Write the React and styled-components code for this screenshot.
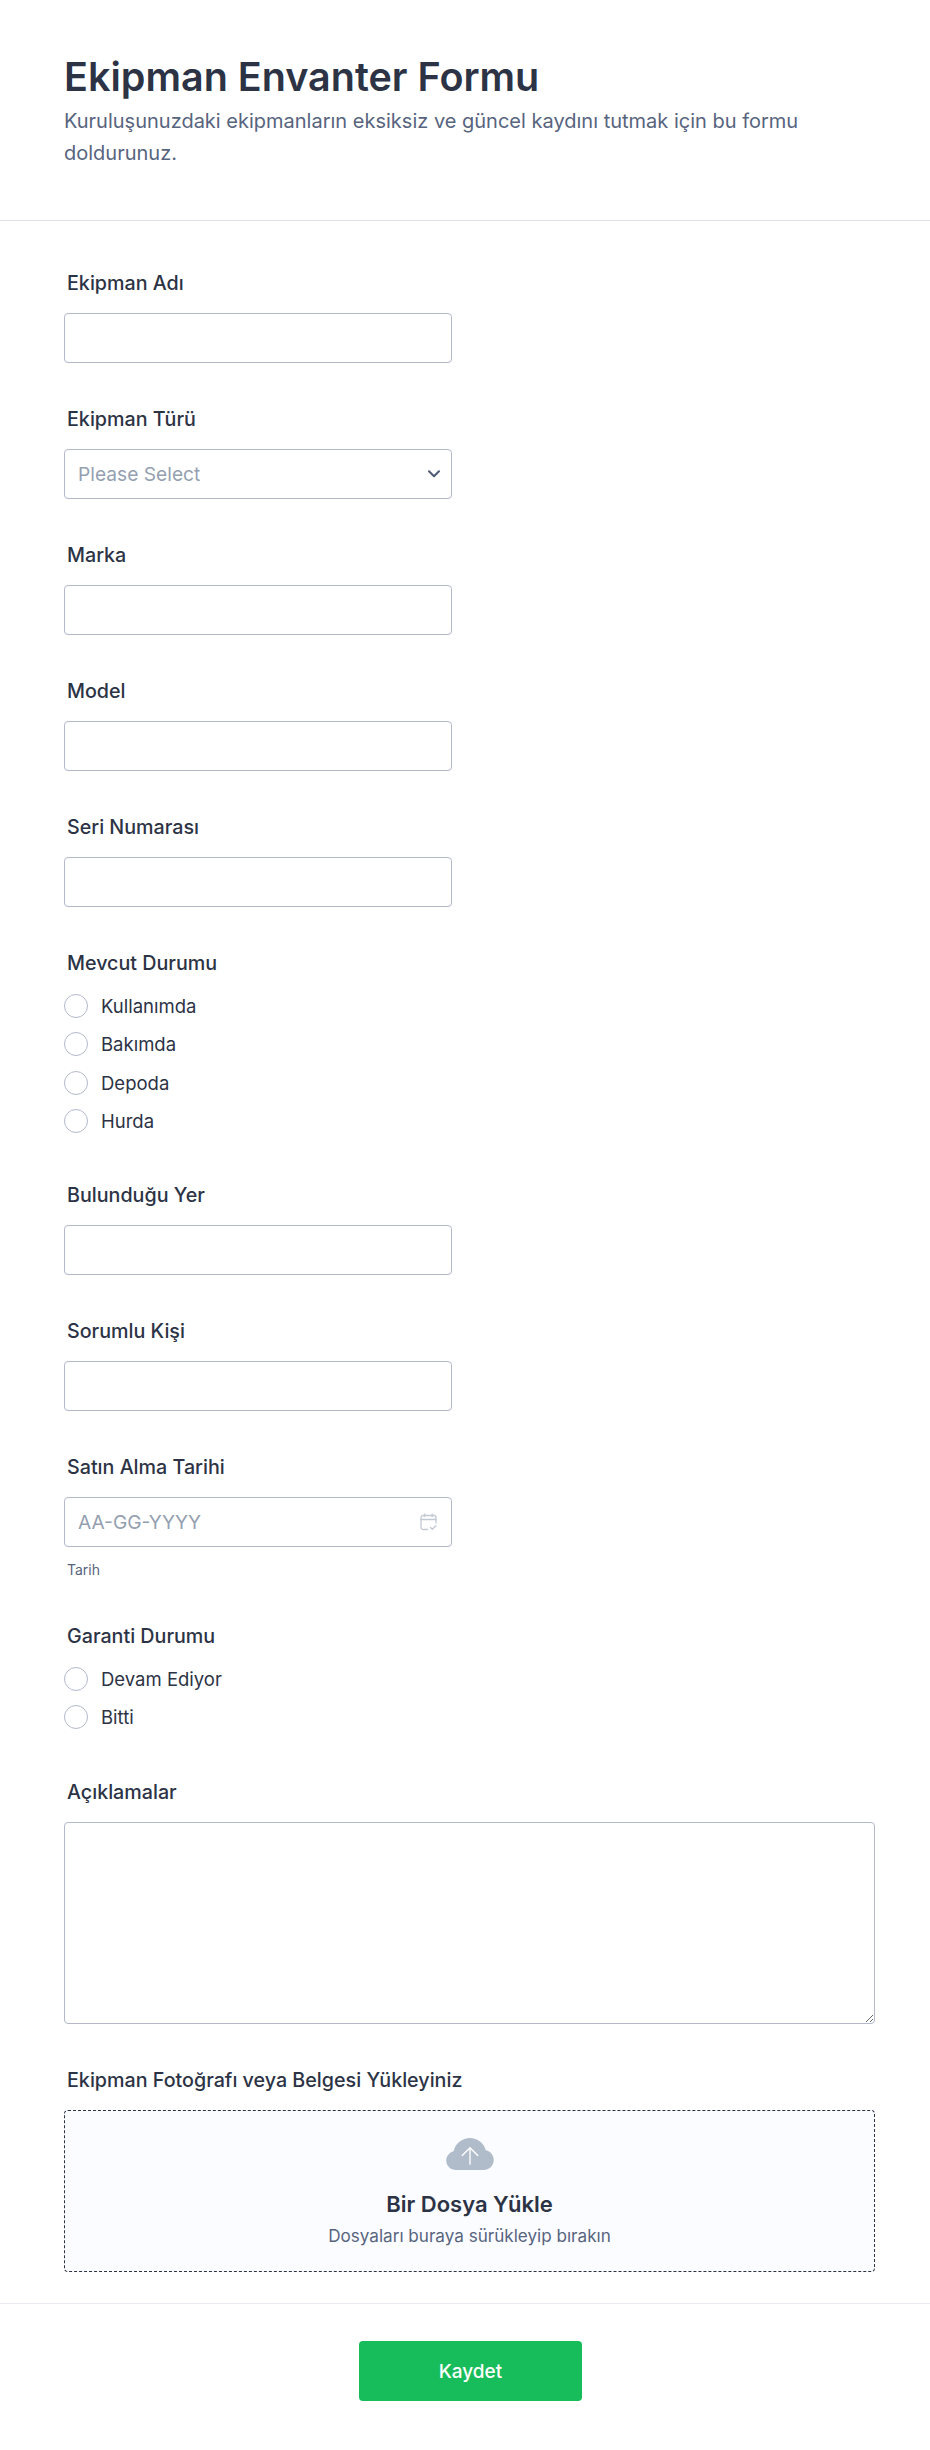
import React from 'react'
import styled, { createGlobalStyle } from 'styled-components'

const GlobalStyle = createGlobalStyle`
  * { box-sizing: border-box; }
  html, body { margin: 0; padding: 0; background: #fff; }
  body { font-family: Inter, "Noto Sans", sans-serif; color: #2c3345; }
`

const Page = styled.div`
  width: 930px;
  min-height: 2450px;
  display: flex;
  flex-direction: column;
`

const Header = styled.header`
  height: 221px;
  padding: 52px 64px 0;
  border-bottom: 1px solid #dfe2ea;
`

const Title = styled.h1`
  margin: 0;
  font-size: 39.5px;
  line-height: 50px;
  font-weight: 600;
  color: #2c3345;
`

const Subtitle = styled.p`
  margin: 3px 0 0;
  width: 802px;
  font-size: 20px;
  line-height: 32px;
  color: #57647e;
`

const Form = styled.form`
  padding: 48px 55px 31px 64px;
  display: flex;
  flex-direction: column;
`

const Field = styled.div`
  margin-bottom: ${p => p.$gap ?? 42}px;
`

const Label = styled.label`
  display: block;
  margin: 0 0 16px 3px;
  font-size: 19.7px;
  line-height: 28px;
  font-weight: 500;
  color: #2c3345;
`

const Input = styled.input`
  display: block;
  width: 388px;
  height: 50px;
  padding: 0 13px;
  border: 1px solid #b4b8ca;
  border-radius: 4px;
  background: #fff;
  font: 19px Inter, sans-serif;
  color: #2c3345;
  outline: none;
`

const Control = styled.div`
  width: 388px;
  height: 50px;
  padding: 0 ${p => p.$right ?? 14}px 0 13px;
  border: 1px solid #b4b8ca;
  border-radius: 4px;
  display: flex;
  align-items: center;
  justify-content: space-between;
  font-size: 19.2px;
  color: #949fb0;
`

const Hint = styled.div`
  margin: 14px 0 0 3px;
  font-size: 14px;
  line-height: 18px;
  color: #57647e;
`

const RadioList = styled.div`
  display: flex;
  flex-direction: column;
  gap: 14.33px;
  padding-top: 1px;
`

const RadioRow = styled.label`
  display: flex;
  align-items: center;
  gap: 13px;
  height: 24px;
  font-size: 18.5px;
  color: #2c3345;
`

const Circle = styled.span`
  width: 24px;
  height: 24px;
  border: 1px solid #b4b8ca;
  border-radius: 50%;
  background: #fff;
`

const TextArea = styled.textarea`
  display: block;
  width: 100%;
  height: 202px;
  border: 1px solid #b4b8ca;
  border-radius: 4px;
  outline: none;
  background: #fff;
`

const Upload = styled.div`
  height: 162px;
  border: 1px dashed #2c3345;
  border-radius: 4px;
  background: #fbfcff;
  display: flex;
  flex-direction: column;
  align-items: center;
  padding-top: 27px;
`

const UploadTitle = styled.div`
  margin-top: 20px;
  font-size: 22px;
  line-height: 28px;
  font-weight: 600;
  color: #2c3345;
`

const UploadText = styled.div`
  margin-top: 6px;
  font-size: 17.1px;
  line-height: 24px;
  color: #57647e;
`

const Footer = styled.footer`
  border-top: 1px solid #eaebf2;
  padding: 37px 53px 50px 64px;
  display: flex;
  justify-content: center;
`

const Submit = styled.button`
  width: 223px;
  height: 60px;
  border: 0;
  border-radius: 4px;
  background: #18bd5b;
  color: #fff;
  font: 500 19px Inter, sans-serif;
`

const ChevronIcon = () => (
  <svg width="12" height="8" viewBox="0 0 12 8" fill="none">
    <path d="M1 1.2 6 6.2l5-5" stroke="#4f5b75" strokeWidth="2" strokeLinecap="round" strokeLinejoin="round" />
  </svg>
)

const CalendarIcon = () => (
  <svg width="17" height="18" viewBox="0 0 17 18" fill="none" stroke="#c3c9d4" strokeWidth="1.3" strokeLinecap="round" strokeLinejoin="round">
    <path d="M7.5 16.5H3a2 2 0 0 1-2-2V4.5a2 2 0 0 1 2-2h11a2 2 0 0 1 2 2V10" />
    <path d="M1 6.5h15M4.8 1v2.5M12.2 1v2.5" />
    <path d="m10.5 14.5 1.8 1.8 3.5-3.5" />
  </svg>
)

const CloudIcon = () => (
  <svg width="48" height="32" viewBox="0 0 49 33">
    <path fill="#b1bccb" d="M10 33C4.4 33 0 28.6 0 23.2c0-4.6 3.2-8.5 7.6-9.6C9.6 5.6 16.4 0 24.4 0c7.8 0 14.4 5.2 16.5 12.6C45.6 13.6 49 17.8 49 22.8 49 28.4 44.4 33 38.8 33Z" />
    <path fill="none" stroke="#fff" strokeWidth="1.4" strokeLinecap="round" strokeLinejoin="round" d="M24.5 27V10M16.5 18l8-8 8 8" />
  </svg>
)

const Radios = ({ items }) => (
  <RadioList>
    {items.map(item => (
      <RadioRow key={item}><Circle />{item}</RadioRow>
    ))}
  </RadioList>
)

export default function App() {
  return (
    <Page>
      <GlobalStyle />
      <Header>
        <Title>Ekipman Envanter Formu</Title>
        <Subtitle>Kuruluşunuzdaki ekipmanların eksiksiz ve güncel kaydını tutmak için bu formu doldurunuz.</Subtitle>
      </Header>
      <Form>
        <Field>
          <Label>Ekipman Adı</Label>
          <Input />
        </Field>
        <Field>
          <Label>Ekipman Türü</Label>
          <Control $right={11}>Please Select<ChevronIcon /></Control>
        </Field>
        <Field>
          <Label>Marka</Label>
          <Input />
        </Field>
        <Field>
          <Label>Model</Label>
          <Input />
        </Field>
        <Field>
          <Label>Seri Numarası</Label>
          <Input />
        </Field>
        <Field $gap={48}>
          <Label>Mevcut Durumu</Label>
          <Radios items={['Kullanımda', 'Bakımda', 'Depoda', 'Hurda']} />
        </Field>
        <Field>
          <Label>Bulunduğu Yer</Label>
          <Input />
        </Field>
        <Field>
          <Label>Sorumlu Kişi</Label>
          <Input />
        </Field>
        <Field $gap={43}>
          <Label>Satın Alma Tarihi</Label>
          <Control>AA-GG-YYYY<CalendarIcon /></Control>
          <Hint>Tarih</Hint>
        </Field>
        <Field $gap={49}>
          <Label>Garanti Durumu</Label>
          <Radios items={['Devam Ediyor', 'Bitti']} />
        </Field>
        <Field>
          <Label>Açıklamalar</Label>
          <TextArea />
        </Field>
        <Field $gap={0}>
          <Label>Ekipman Fotoğrafı veya Belgesi Yükleyiniz</Label>
          <Upload>
            <CloudIcon />
            <UploadTitle>Bir Dosya Yükle</UploadTitle>
            <UploadText>Dosyaları buraya sürükleyip bırakın</UploadText>
          </Upload>
        </Field>
      </Form>
      <Footer>
        <Submit type="button">Kaydet</Submit>
      </Footer>
    </Page>
  )
}
